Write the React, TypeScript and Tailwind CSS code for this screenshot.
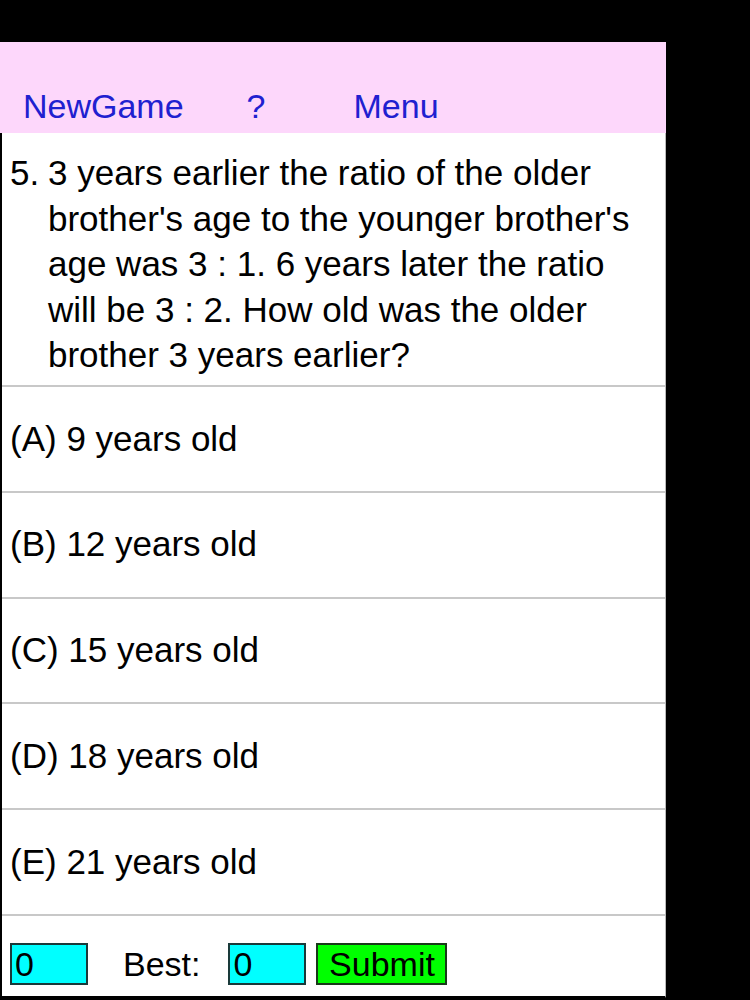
import React from "react";

const options = [
  "(A) 9 years old",
  "(B) 12 years old",
  "(C) 15 years old",
  "(D) 18 years old",
  "(E) 21 years old",
];

export default function App() {
  return (
    <div
      className="w-[750px] h-[1000px] bg-black overflow-hidden"
      style={{ fontFamily: '"Liberation Sans", Arial, sans-serif' }}
    >
      <div className="w-[666px] h-[42px]" />
      {/* header */}
      <div className="w-[666px] h-[91px] bg-[#fdd7fb] flex items-end pb-[1px] text-[34px] text-[#2020d0]">
        <span className="ml-[23px]">NewGame</span>
        <span className="ml-[63px]">?</span>
        <span className="ml-[88px]">Menu</span>
      </div>

      <div className="w-[666px] h-[865px] bg-white border-l-2 border-b-2 border-black border-r border-r-[#bbbbbb] flex flex-col">
        {/* question */}
        <div className="h-[254px] border-b-2 border-[#c8c8c8] pt-[17px] pl-[8px] pr-[4px] text-[35px] leading-[45.5px] text-black whitespace-nowrap">
          <div className="flex">
            <span className="w-[38px] shrink-0">5.</span>
            <span>
              3 years earlier the ratio of the older
              <br />
              brother's age to the younger brother's
              <br />
              age was 3 : 1. 6 years later the ratio
              <br />
              will be 3 : 2. How old was the older
              <br />
              brother 3 years earlier?
            </span>
          </div>
        </div>

        {options.map((o) => (
          <div
            key={o}
            className="h-[105.8px] shrink-0 border-b-2 border-[#c8c8c8] flex items-center pl-[8px] text-[35px] text-black"
          >
            {o}
          </div>
        ))}

        {/* footer */}
        <div className="flex-1 flex items-center pl-[8px] pt-[16px] text-[34px] text-black">
          <div className="w-[78px] h-[42px] bg-[#00ffff] border-2 border-[#1a3a3a] flex items-center pl-[3px] leading-none">
            0
          </div>
          <span className="ml-[35px] leading-none">Best:</span>
          <div className="ml-[28px] w-[78px] h-[42px] bg-[#00ffff] border-2 border-[#1a3a3a] flex items-center pl-[3px] leading-none">
            0
          </div>
          <div className="ml-[10px] w-[131px] h-[42px] bg-[#00ff00] border-2 border-[#1a3a1a] flex items-center justify-center leading-none">
            Submit
          </div>
        </div>
      </div>
    </div>
  );
}
